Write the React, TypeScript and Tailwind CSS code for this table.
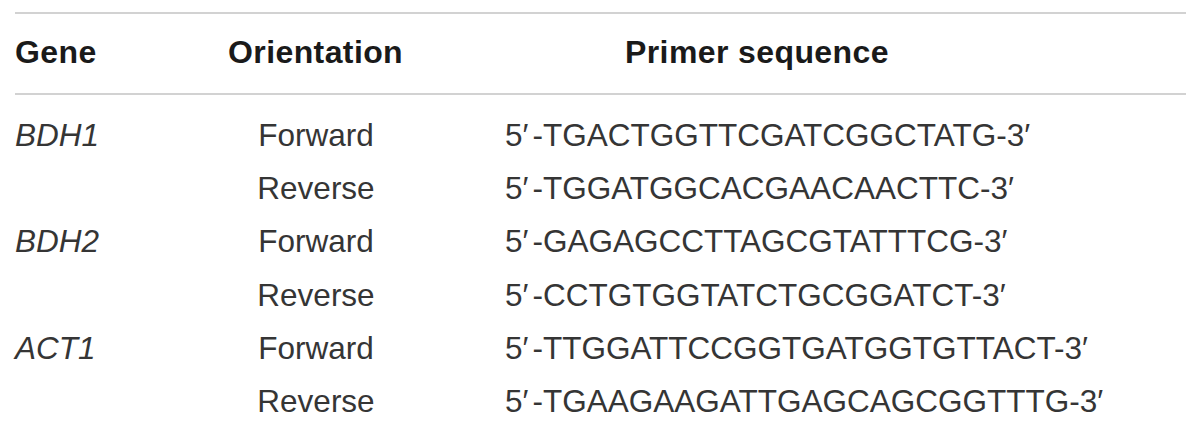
const rows = [
  { gene: "BDH1", dir: "Forward", seq: "TGACTGGTTCGATCGGCTATG" },
  { gene: "", dir: "Reverse", seq: "TGGATGGCACGAACAACTTC" },
  { gene: "BDH2", dir: "Forward", seq: "GAGAGCCTTAGCGTATTTCG" },
  { gene: "", dir: "Reverse", seq: "CCTGTGGTATCTGCGGATCT" },
  { gene: "ACT1", dir: "Forward", seq: "TTGGATTCCGGTGATGGTGTTACT" },
  { gene: "", dir: "Reverse", seq: "TGAAGAAGATTGAGCAGCGGTTTG" },
];

export default function App() {
  return (
    <div className="w-[1200px] h-[428px] overflow-hidden bg-white font-['Liberation_Sans',Arial,sans-serif]">
      <div className="pt-[12px] pl-[15px] w-[1186px]">
        {/* header */}
        <div className="border-y-2 border-[#d2d2d2] pt-[12px] pb-[14px]">
          <div className="grid grid-cols-[213px_277px_1fr] h-[53px] leading-[53px] text-[32px] font-bold text-[#1a1a1a] tracking-[0.4px]">
            <div>Gene</div>
            <div>Orientation</div>
            <div className="pl-[120px]">Primer sequence</div>
          </div>
        </div>

        {/* body */}
        <div className="pt-[13.5px] text-[31.5px] text-[#353535]">
          {rows.map((r, i) => (
            <div key={i} className="grid grid-cols-[213px_176px_101px_1fr] h-[53.4px] leading-[53.4px]">
              <div className="italic">{r.gene}</div>
              <div className="text-center">{r.dir}</div>
              <div />
              <div className="whitespace-nowrap">
                5<span className="mr-[4px]">′</span>-{r.seq}-3′
              </div>
            </div>
          ))}
        </div>
      </div>
    </div>
  );
}
